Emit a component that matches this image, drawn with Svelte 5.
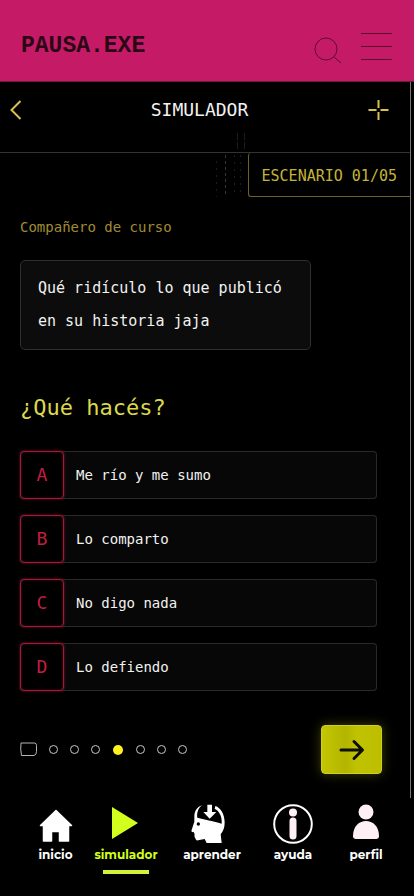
<script>
	let options = [
		{ key: 'A', text: 'Me río y me sumo' },
		{ key: 'B', text: 'Lo comparto' },
		{ key: 'C', text: 'No digo nada' },
		{ key: 'D', text: 'Lo defiendo' }
	];

	let steps = 7;
	let current = 3;
	let selected = null;
</script>

<header class="brand">
	<span class="brand-name">PAUSA.EXE</span>
	<div class="brand-actions">
		<button aria-label="Buscar">
			<svg width="28" height="32" viewBox="0 0 28 32">
				<circle cx="12" cy="17" r="11" />
				<path d="M20 25l7 6" />
			</svg>
		</button>
		<button aria-label="Menú">
			<svg width="32" height="32" viewBox="0 0 32 32">
				<path d="M0 1.500h31M0 14.500h31M0 27.500h31" />
			</svg>
		</button>
	</div>
</header>

<main class="screen">
	<div class="topbar">
		<button aria-label="Volver">
			<svg width="21" height="22" viewBox="0 0 21 22">
				<path d="M10.500 2L1.500 11l9 9" />
			</svg>
		</button>
		<h1>SIMULADOR</h1>
		<button aria-label="Agregar">
			<svg width="21" height="22" viewBox="0 0 21 22">
				<path d="M10.500 1v8M10.500 13v8M0.500 11h8M12.500 11h8" />
			</svg>
		</button>
	</div>

	<div class="tag-row">
		<div class="tag">
			<svg class="noise" width="34" height="64" viewBox="0 0 34 64" aria-hidden="true">
				<path d="M22.500 0v18M29.500 0v18" stroke-dasharray="7 2" />
				<path d="M10.500 22v42" stroke-dasharray="3 3" class="bright" />
				<path d="M1.500 28v36M19.500 22v42M25.500 22v42" stroke-dasharray="2 5" />
			</svg>
			ESCENARIO 01/05
		</div>
	</div>

	<section class="scene">
		<p class="author">Compañero de curso</p>
		<p class="message">Qué ridículo lo que publicó<br />en su historia jaja</p>

		<h2>¿Qué hacés?</h2>
		<div class="options">
			{#each options as option}
				<button
					class="option"
					aria-pressed={selected === option.key}
					on:click={() => (selected = option.key)}
				>
					<span class="key">{option.key}</span>
					<span class="text">{option.text}</span>
				</button>
			{/each}
		</div>

		<div class="controls">
			<div class="progress">
				<svg width="17" height="15" viewBox="0 0 17 15">
					<path d="M1 1h13.500q2 0 2 2.500v6q0 3.500-2.500 4H1.500Q0.200 7 1 1z" />
				</svg>
				{#each Array(steps) as _, i}
					<span class="dot" class:active={i === current}></span>
				{/each}
			</div>
			<button class="next" aria-label="Siguiente">
				<svg width="26" height="22" viewBox="0 0 26 22">
					<path d="M2 11h21M15 2.500l8.500 8.500-8.500 8.500" />
				</svg>
			</button>
		</div>
	</section>
</main>

<nav>
	<a href="#inicio">
		<svg width="40" height="40" viewBox="0 0 40 40">
			<path d="M20 6.500L4.500 21.500h3V37h8V27.500h8V37h9V21.500h3z" stroke="currentColor" stroke-width="1.500" stroke-linejoin="round" />
		</svg>
		inicio
	</a>
	<a href="#simulador" class="active">
		<svg width="40" height="40" viewBox="0 0 40 40">
			<path d="M6 3l26 16L6 35z" />
		</svg>
		simulador
	</a>
	<a href="#aprender">
		<svg width="40" height="40" viewBox="36 27 120 120">
			<path d="M66 31C52 35 43 48 43 64V80L34 108Q34 112 42 112L44 120L43 124L48 134Q50 138 58 135L74 132L80 144H125L122 118C130 108 134 98 134 82C134 58 122 38 106 33L104 41C118 48 127 65 125 86C112 82 100 78 90 77L52 68C50 55 54 40 66 31z" />
			<path d="M82 29h14v22h13L89 71 70 51h12z" />
			<circle cx="55" cy="87" r="5" fill="#000" />
		</svg>
		aprender
	</a>
	<a href="#ayuda">
		<svg width="40" height="40" viewBox="0 0 40 40">
			<circle cx="20" cy="20" r="18.800" fill="none" stroke="#fff" stroke-width="2" />
			<g class="soft">
				<circle cx="20" cy="8.500" r="4" />
				<rect x="16.500" y="13.500" width="7" height="22" rx="3.500" />
			</g>
		</svg>
		ayuda
	</a>
	<a href="#perfil">
		<svg width="40" height="40" viewBox="0 0 40 40">
			<g class="soft">
				<circle cx="20" cy="8" r="7.500" />
				<path d="M7 32C7 12 33 12 33 32Q33 35 30 35H10Q7 35 7 32z" />
			</g>
		</svg>
		perfil
	</a>
</nav>

<style>
	:global(body) {
		margin: 0;
		background: #000;
		font-family: 'DejaVu Sans Mono', monospace;
	}

	button {
		display: flex;
		padding: 0;
		border: 0;
		background: none;
		color: inherit;
		font: inherit;
		cursor: pointer;
	}

	h1,
	h2,
	p {
		margin: 0;
		font-weight: 400;
	}

	.brand {
		display: flex;
		justify-content: space-between;
		align-items: flex-start;
		box-sizing: border-box;
		height: 82px;
		padding: 32px 21px 0;
		background: #c51b67;
		border-bottom: 1px solid #6b1a3e;
	}

	.brand-name {
		font: 700 23px/28px 'Liberation Mono', monospace;
		color: #2b0716;
	}

	.brand-actions {
		display: flex;
		gap: 19px;
	}

	.brand-actions svg {
		fill: none;
		stroke: #5e0a31;
		stroke-width: 1;
	}

	.screen {
		margin-right: 3px;
		border-right: 1px solid #777;
		color: #f2f2f0;
	}

	.topbar {
		display: flex;
		justify-content: space-between;
		align-items: center;
		height: 56px;
		padding: 0 21px 14px 10px;
		border-bottom: 1px solid #34342c;
	}

	.topbar svg {
		fill: none;
		stroke: #d8c24a;
		stroke-width: 2;
	}

	h1 {
		font-size: 18px;
		line-height: 24px;
	}

	.tag-row {
		display: flex;
		justify-content: flex-end;
	}

	.tag {
		position: relative;
		padding: 12px 13px 9px;
		border: 1px solid #6c602c;
		border-width: 0 0 1px 1px;
		border-radius: 3px 0 0 3px;
		color: #c4b436;
		font-size: 15px;
		line-height: 22px;
	}

	/* scanline residue bleeding off the tag's left edge */
	.noise {
		position: absolute;
		right: 100%;
		top: -20px;
		fill: none;
		stroke: #1d1d1d;
	}

	.noise .bright {
		stroke: #383838;
	}

	.scene {
		padding: 20px 28px 24px 20px;
	}

	.author {
		color: #a08c33;
		font-size: 14px;
		line-height: 20px;
	}

	.message {
		box-sizing: border-box;
		width: fit-content;
		margin-top: 23px;
		padding: 11px 28px 11px 17px;
		border: 1px solid #2e2e2e;
		border-radius: 5px;
		background: #0c0c0c;
		font-size: 15px;
		line-height: 33px;
	}

	h2 {
		margin: 44px 0 29px;
		color: #dcd84a;
		font-size: 22px;
		line-height: 28px;
	}

	.options {
		display: flex;
		flex-direction: column;
		gap: 16px;
		margin-right: 5px;
	}

	.option {
		align-items: stretch;
		height: 48px;
		border-radius: 4px;
		background: #070707;
		box-shadow: inset 0 0 0 1px #292929;
		font-size: 14px;
		line-height: 48px;
	}

	.key {
		box-sizing: border-box;
		width: 44px;
		border: 1px solid #9c1c3a;
		border-radius: 4px;
		background: #000;
		box-shadow: 0 0 3px #7a1029, inset 0 0 3px #4d0a1b;
		color: #c01f3f;
		font-size: 18px;
		line-height: 46px;
		text-align: center;
	}

	.text {
		padding-left: 12px;
	}

	.controls {
		display: flex;
		justify-content: space-between;
		align-items: center;
		margin-top: 34px;
	}

	.progress {
		display: flex;
		align-items: center;
		gap: 12px;
	}

	.progress svg {
		fill: none;
		stroke: #b5b5b5;
	}

	.dot {
		box-sizing: border-box;
		width: 9px;
		height: 9px;
		border: 1px solid #c9c9c9;
		border-radius: 50%;
	}

	.dot.active {
		width: 10px;
		height: 10px;
		margin: 0 1px;
		border: 0;
		background: #fff01f;
	}

	.next {
		justify-content: center;
		align-items: center;
		box-sizing: border-box;
		width: 61px;
		height: 49px;
		border: 1px solid #cfd024;
		border-radius: 4px;
		background: linear-gradient(90deg, #c3c600, #b3b500 40%, #c0c300 60%, #bcbe00);
		box-shadow: 0 0 12px #3f4008;
	}

	.next svg {
		fill: none;
		stroke: #0d0d00;
		stroke-width: 3;
		stroke-linecap: round;
		stroke-linejoin: round;
	}

	nav {
		display: grid;
		grid-template-columns: 71fr 70fr 102fr 60fr 86fr;
		padding: 6px 5px 22px 20px;
	}

	nav a {
		display: flex;
		flex-direction: column;
		align-items: center;
		gap: 3px;
		color: #fff;
		font: 700 12px/16px Montserrat, Inter, sans-serif;
		text-decoration: none;
	}

	nav svg {
		fill: currentColor;
		overflow: visible;
	}

	.soft {
		fill: #fff0f5;
	}

	nav .active {
		color: #d2ff1c;
	}

	nav .active::after {
		content: '';
		width: 46px;
		height: 4px;
		margin-top: 4px;
		background: #d3f03c;
	}
</style>
